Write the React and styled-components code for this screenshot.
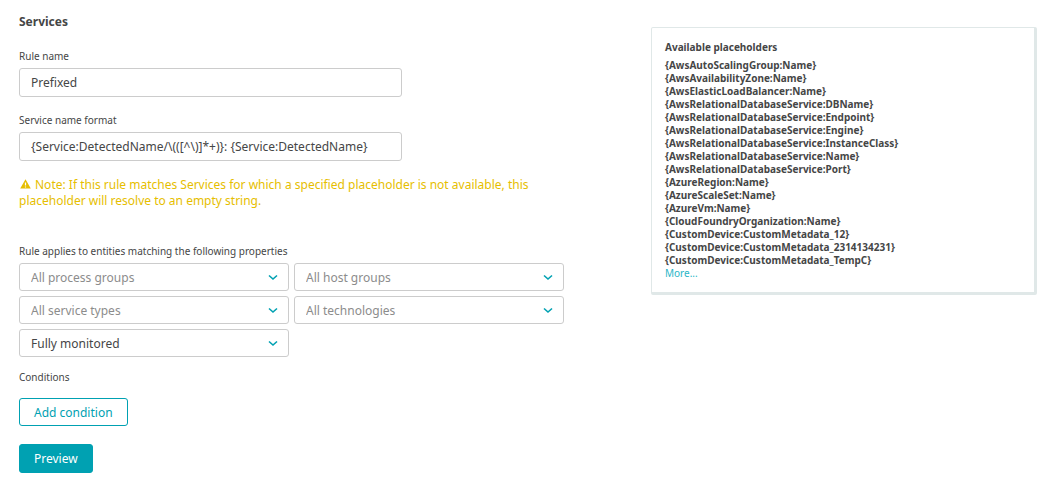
import React, { useState } from "react";
import styled, { createGlobalStyle } from "styled-components";

const GlobalStyle = createGlobalStyle`
  * {
    box-sizing: border-box;
  }
  body {
    margin: 0;
    background: #fff;
    color: #454646;
    font-family: "Noto Sans", "Open Sans", sans-serif;
    font-size: 12px;
  }
  button,
  input,
  select {
    font: inherit;
  }
`;

const Page = styled.div`
  display: grid;
  grid-template-columns: minmax(0, 545fr) minmax(0, 386fr);
  align-items: start;
  gap: 87px;
  padding: 14px 24px 20px 19px;
`;
const Form = styled.form`
  display: flex;
  flex-direction: column;
`;
const Title = styled.h1`
  margin: 0 0 18px;
  font-size: 12px;
  line-height: 16px;
  font-weight: 700;
`;
const Field = styled.div`
  display: flex;
  flex-direction: column;
  gap: 4px;
  max-width: 383px;
  margin-bottom: 15px;
`;
const Label = styled.label`
  font-size: 10px;
  line-height: 16px;
`;
const TextInput = styled.input`
  width: 100%;
  height: 29px;
  padding: 0 11px;
  border: 1px solid #ccc;
  border-radius: 3px;
  background: #fff;
  color: #454646;
`;
const Note = styled.p`
  margin: 0 0 34px;
  padding-top: 1px;
  color: #e6be00;
  line-height: 16px;
`;
const WarningIcon = styled.svg`
  width: 11px;
  height: 10px;
  margin: 0 4px 0 1px;
`;
const Group = styled.fieldset`
  min-width: 0;
  margin: 0 0 12px;
  padding: 0;
  border: 0;
`;
const Legend = styled.legend`
  margin-bottom: 4px;
  padding: 0;
  font-size: 10px;
  line-height: 16px;
`;
const SelectGrid = styled.div`
  display: grid;
  grid-template-columns: 1fr 1fr;
  gap: 5px;
`;
const SelectBox = styled.div`
  position: relative;
`;
const Select = styled.select`
  display: block;
  width: 100%;
  height: 28px;
  padding: 0 32px 0 11px;
  appearance: none;
  border: 1px solid #ccc;
  border-radius: 3px;
  background: #fff;
  color: ${({ $empty }) => ($empty ? "#8c8c8c" : "#454646")};
`;
const Chevron = styled.svg`
  position: absolute;
  top: 11px;
  right: 11px;
  width: 10px;
  height: 7px;
  pointer-events: none;
`;
const SectionLabel = styled.h2`
  margin: 0 0 13px;
  font-size: 10px;
  line-height: 16px;
  font-weight: 400;
`;
const Button = styled.button`
  align-self: flex-start;
  height: ${({ $primary }) => ($primary ? "29px" : "28px")};
  margin-bottom: 18px;
  padding: 0 14px;
  border: 1px solid #00a1b2;
  border-radius: 3px;
  background: ${({ $primary }) => ($primary ? "#00a1b2" : "#fff")};
  color: ${({ $primary }) => ($primary ? "#fff" : "#00a1b2")};
  cursor: pointer;
`;
const Card = styled.aside`
  margin-top: 13px;
  padding: 12px 13px;
  border: 1px solid #e0e8e8;
  border-right-width: 3px;
  border-bottom-width: 3px;
  border-radius: 2px;
  font-size: 10px;
  line-height: 13px;
`;
const CardTitle = styled.h2`
  margin: 0 0 5px;
  font-size: 10px;
  line-height: 14px;
  font-weight: 700;
`;
const PlaceholderList = styled.ul`
  margin: 0;
  padding: 0;
  list-style: none;
  font-weight: 700;
`;
const MoreLink = styled.a`
  color: #2ab6c7;
  text-decoration: none;
`;

const placeholders = [
  "{AwsAutoScalingGroup:Name}",
  "{AwsAvailabilityZone:Name}",
  "{AwsElasticLoadBalancer:Name}",
  "{AwsRelationalDatabaseService:DBName}",
  "{AwsRelationalDatabaseService:Endpoint}",
  "{AwsRelationalDatabaseService:Engine}",
  "{AwsRelationalDatabaseService:InstanceClass}",
  "{AwsRelationalDatabaseService:Name}",
  "{AwsRelationalDatabaseService:Port}",
  "{AzureRegion:Name}",
  "{AzureScaleSet:Name}",
  "{AzureVm:Name}",
  "{CloudFoundryOrganization:Name}",
  "{CustomDevice:CustomMetadata_12}",
  "{CustomDevice:CustomMetadata_2314134231}",
  "{CustomDevice:CustomMetadata_TempC}",
];

const filters = [
  { id: "processGroups", label: "Process groups", text: "All process groups", empty: true },
  { id: "hostGroups", label: "Host groups", text: "All host groups", empty: true },
  { id: "serviceTypes", label: "Service types", text: "All service types", empty: true },
  { id: "technologies", label: "Technologies", text: "All technologies", empty: true },
  { id: "monitoring", label: "Monitoring mode", text: "Fully monitored", empty: false },
];

function FilterSelect({ filter }) {
  return (
    <SelectBox>
      <Select id={filter.id} aria-label={filter.label} $empty={filter.empty}>
        <option>{filter.text}</option>
      </Select>
      <Chevron viewBox="0 0 10 7" aria-hidden="true">
        <path d="M1 1.5 L5 5 L9 1.5" fill="none" stroke="#00a1b2" strokeWidth="1.6" />
      </Chevron>
    </SelectBox>
  );
}

function App() {
  const [ruleName, setRuleName] = useState("Prefixed");
  const [format, setFormat] = useState(
    "{Service:DetectedName/\\(([^\\)]*+)}: {Service:DetectedName}"
  );

  return (
    <>
      <GlobalStyle />
      <Page>
        <Form onSubmit={(e) => e.preventDefault()}>
          <Title>Services</Title>
          <Field>
            <Label htmlFor="ruleName">Rule name</Label>
            <TextInput
              id="ruleName"
              value={ruleName}
              onChange={(e) => setRuleName(e.target.value)}
            />
          </Field>
          <Field>
            <Label htmlFor="format">Service name format</Label>
            <TextInput
              id="format"
              value={format}
              spellCheck={false}
              onChange={(e) => setFormat(e.target.value)}
            />
          </Field>
          <Note>
            <WarningIcon viewBox="0 0 11 10" aria-hidden="true">
              <path
                d="M5.5 0.3 L10.8 9.6 H0.2 Z M4.9 3.4 V6.6 H6.1 V3.4 Z M4.9 7.4 V8.6 H6.1 V7.4 Z"
                fill="#e6be00"
                fillRule="evenodd"
              />
            </WarningIcon>
            Note: If this rule matches Services for which a specified placeholder
            is not available, this placeholder will resolve to an empty string.
          </Note>
          <Group>
            <Legend>Rule applies to entities matching the following properties</Legend>
            <SelectGrid>
              {filters.map((filter) => (
                <FilterSelect key={filter.id} filter={filter} />
              ))}
            </SelectGrid>
          </Group>
          <SectionLabel>Conditions</SectionLabel>
          <Button type="button">Add condition</Button>
          <Button type="submit" $primary>
            Preview
          </Button>
        </Form>
        <Card>
          <CardTitle>Available placeholders</CardTitle>
          <PlaceholderList>
            {placeholders.map((name) => (
              <li key={name}>{name}</li>
            ))}
          </PlaceholderList>
          <MoreLink href="#more">More...</MoreLink>
        </Card>
      </Page>
    </>
  );
}

export default App;
